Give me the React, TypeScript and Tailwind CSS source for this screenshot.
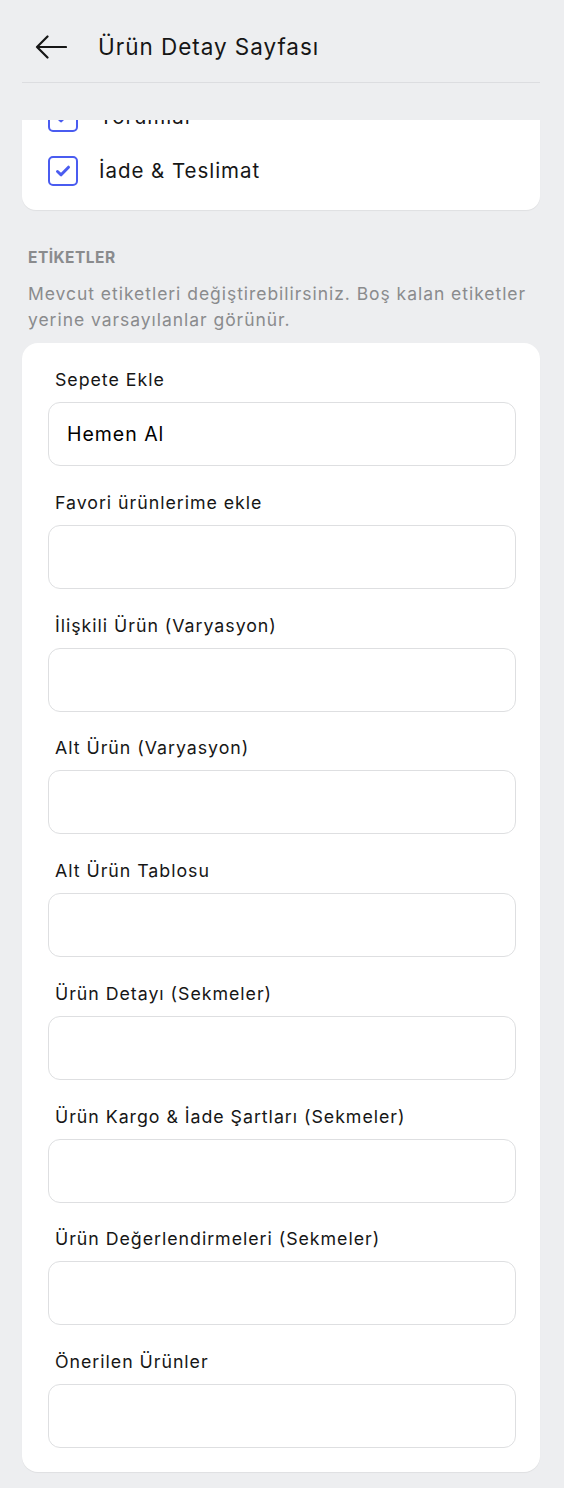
import React from 'react';

const fields: { label: string; value?: string }[] = [
  { label: 'Sepete Ekle', value: 'Hemen Al' },
  { label: 'Favori ürünlerime ekle' },
  { label: 'İlişkili Ürün (Varyasyon)' },
  { label: 'Alt Ürün (Varyasyon)' },
  { label: 'Alt Ürün Tablosu' },
  { label: 'Ürün Detayı (Sekmeler)' },
  { label: 'Ürün Kargo & İade Şartları (Sekmeler)' },
  { label: 'Ürün Değerlendirmeleri (Sekmeler)' },
  { label: 'Önerilen Ürünler' },
];

const Check: React.FC = () => (
  <span className="flex h-[30px] w-[30px] shrink-0 items-center justify-center rounded-[5px] border-[2.5px] border-[#4a5cf0] bg-white">
    <svg width="18" height="18" viewBox="0 0 18 18" fill="none">
      <path d="M3.5 9.5l3.6 3.3L14.5 5.2" stroke="#4a5cf0" strokeWidth="3" strokeLinecap="round" strokeLinejoin="round" />
    </svg>
  </span>
);

export default function App() {
  return (
    <div className="min-h-screen bg-[#edeef0] font-['Inter',sans-serif] tracking-[0.06em] text-[#161616]">
      {/* header */}
      <div className="ml-[22px] mr-[24px] flex h-[83px] items-center border-b border-[#dcdde0] pt-[12px]">
        <button aria-label="Geri" className="ml-[13px] mr-[31px] flex items-center">
          <svg width="32" height="24" viewBox="0 0 32 24" fill="none">
            <path d="M31 12H2M12.5 1.5L2 12l10.5 10.5" stroke="#161616" strokeWidth="2.2" strokeLinecap="round" strokeLinejoin="round" />
          </svg>
        </button>
        <h1 className="text-[22.5px] font-normal">Ürün Detay Sayfası</h1>
      </div>

      <div className="ml-[22px] mr-[24px] pt-[37px] pb-[16px]">
        {/* clipped options card */}
        <div className="h-[90px] overflow-hidden rounded-b-[14px] bg-white px-[26px] shadow-[0_1px_1px_rgba(0,0,0,0.06)]">
          <div className="mt-[-18px] flex flex-col gap-[24px]">
            <label className="flex h-[30px] items-center gap-[21px] text-[20.5px]">
              <Check />
              Yorumlar
            </label>
            <label className="flex h-[30px] items-center gap-[21px] text-[20.5px]">
              <Check />
              İade &amp; Teslimat
            </label>
          </div>
        </div>

        {/* labels section */}
        <h2 className="mt-[38px] px-[6px] text-[15.5px] leading-[20px] font-bold tracking-[0.03em] text-[#8a8b8d]">ETİKETLER</h2>
        <p className="mt-[13px] px-[6px] text-[17.5px] leading-[26px] text-[#8a8b8d]">
          Mevcut etiketleri değiştirebilirsiniz. Boş kalan etiketler yerine varsayılanlar görünür.
        </p>

        <div className="mt-[10px] flex flex-col gap-[25.75px] rounded-[16px] bg-white pt-[26px] pr-[24px] pb-[24px] pl-[26px] shadow-[0_1px_1px_rgba(0,0,0,0.06)]">
          {fields.map((f) => (
            <div key={f.label} className="flex flex-col">
              <label className="mb-[11px] pl-[7px] text-[17.8px] leading-[22px]">{f.label}</label>
              <input
                defaultValue={f.value ?? ''}
                className="h-[64px] w-full rounded-[12px] border border-[#dedfe1] bg-white px-[18px] text-[19.5px] tracking-[0.05em] text-black outline-none"
              />
            </div>
          ))}
        </div>
      </div>
    </div>
  );
}
